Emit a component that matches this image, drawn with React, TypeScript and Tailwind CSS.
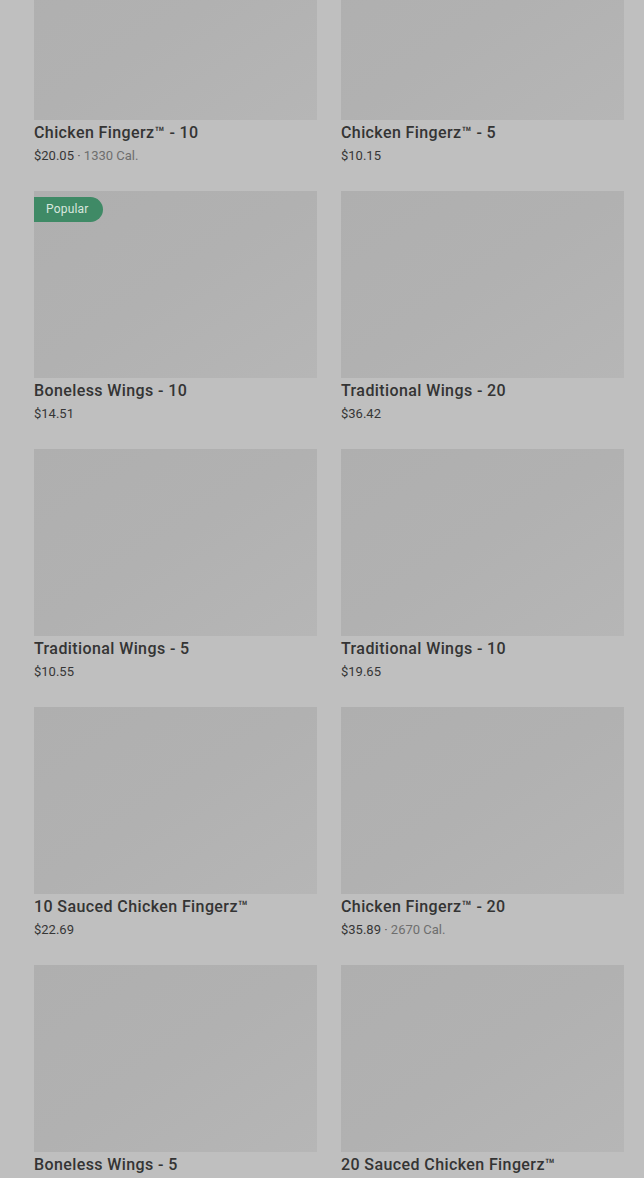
import React from "react";

type Item = { name: string; price: string; cal?: string; popular?: boolean };

const items: Item[] = [
  { name: "Chicken Fingerz™ - 10", price: "$20.05", cal: "1330 Cal." },
  { name: "Chicken Fingerz™ - 5", price: "$10.15" },
  { name: "Boneless Wings - 10", price: "$14.51", popular: true },
  { name: "Traditional Wings - 20", price: "$36.42" },
  { name: "Traditional Wings - 5", price: "$10.55" },
  { name: "Traditional Wings - 10", price: "$19.65" },
  { name: "10 Sauced Chicken Fingerz™", price: "$22.69" },
  { name: "Chicken Fingerz™ - 20", price: "$35.89", cal: "2670 Cal." },
  { name: "Boneless Wings - 5", price: "$7.25" },
  { name: "20 Sauced Chicken Fingerz™", price: "$45.39" },
];

function Card({ item }: { item: Item }) {
  return (
    <div className="flex flex-col">
      <div className="relative h-[187px] bg-gradient-to-br from-[#afafaf] via-[#b1b1b1] to-[#b6b6b6]">
        {item.popular && (
          <div className="absolute left-0 top-[6px] flex h-[25px] items-center rounded-r-full bg-[#3f8a66] pl-[12px] pr-[14px] text-[12px] tracking-[0.2px] text-[#d8e6de]">
            Popular
          </div>
        )}
      </div>
      <div className="pt-[1px] text-[16px] leading-[24px] font-medium text-[#343434] tracking-[0.4px]">
        {item.name}
      </div>
      <div className="mt-[1px] text-[13px] leading-[20px] text-[#363636]">
        {item.price}
        {item.cal && (
          <span className="text-[#6e6e6e]">
            {" "}
            <span className="text-[#555]">·</span> {item.cal}
          </span>
        )}
      </div>
    </div>
  );
}

export default function App() {
  return (
    <div
      className="h-[1178px] w-[644px] overflow-hidden bg-[#bfbfbf]"
      style={{ fontFamily: "Roboto, 'Noto Sans', sans-serif" }}
    >
      <div className="-mt-[67.5px] grid grid-cols-2 gap-x-[24px] gap-y-[25px] pl-[34px] pr-[20px]">
        {items.map((it, i) => (
          <Card key={i} item={it} />
        ))}
      </div>
    </div>
  );
}
